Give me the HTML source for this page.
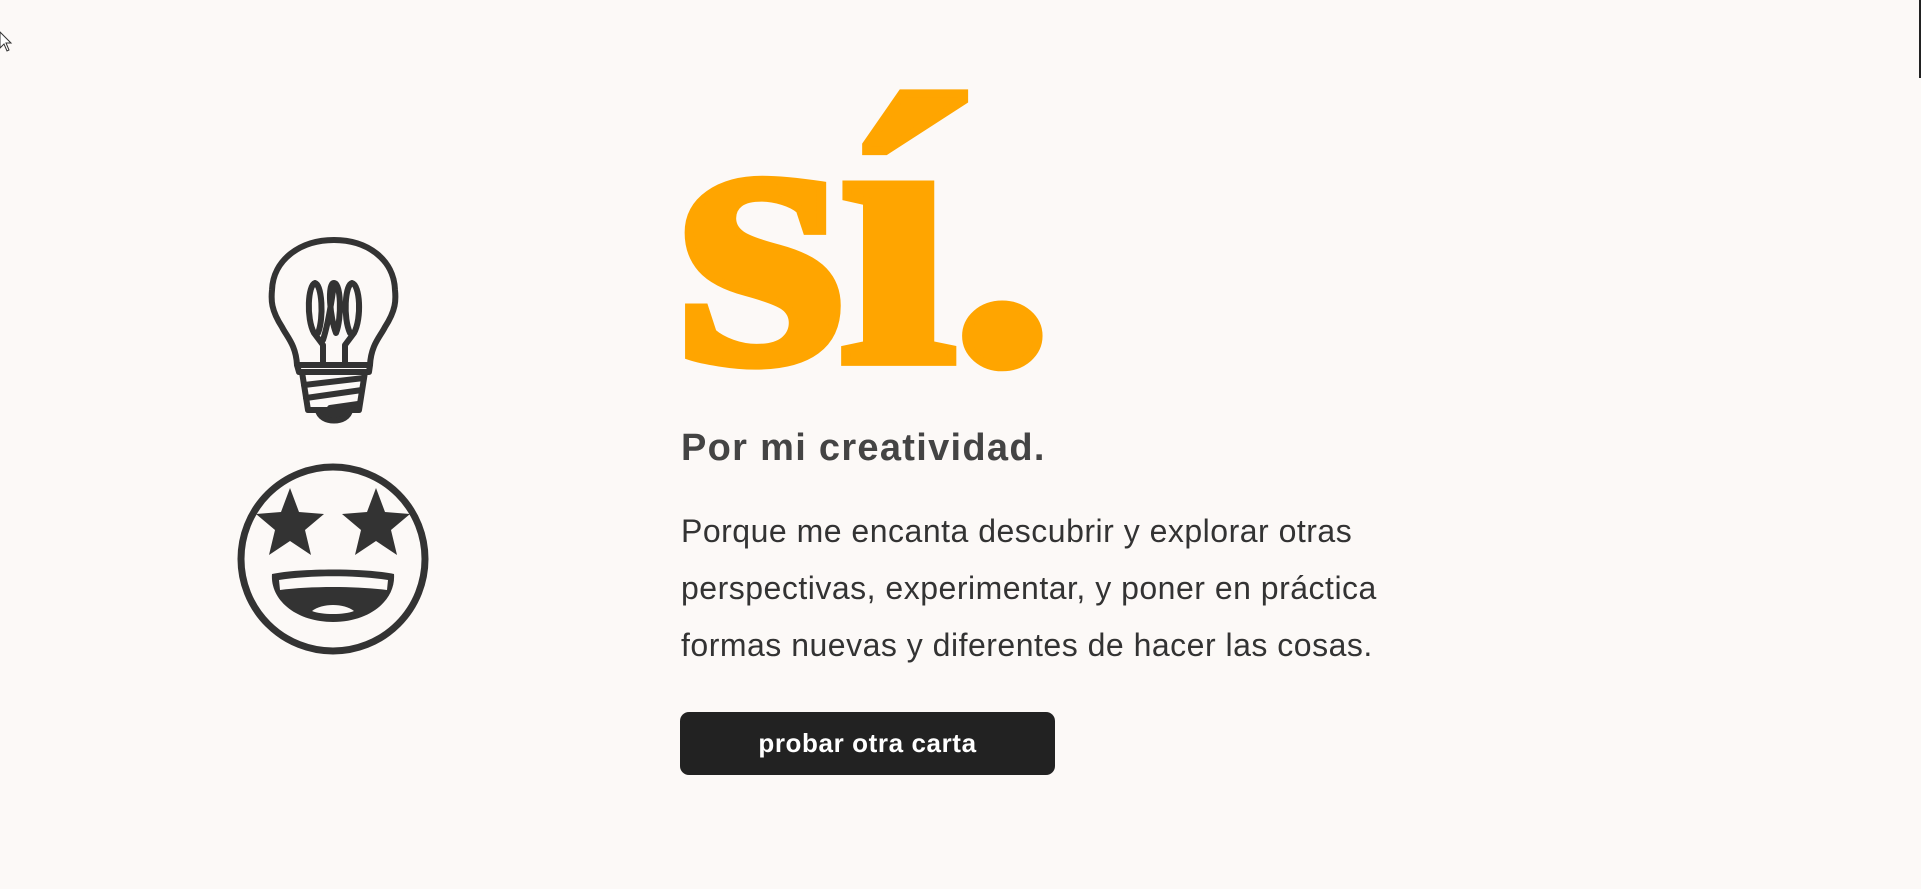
<!DOCTYPE html>
<html><head><meta charset="utf-8"><style>
html,body{margin:0;padding:0;width:1921px;height:889px;background:#fcf9f7;overflow:hidden;position:relative;font-family:"Liberation Sans",sans-serif}
.si{position:absolute;left:676px;top:40px;font-family:"Liberation Serif",serif;font-weight:bold;font-size:330px;line-height:1;color:#ffa500;-webkit-text-stroke:7px #ffa500;transform-origin:0 0;transform:scale(1.33,1.17);letter-spacing:-8px}
h2{position:absolute;left:681px;top:427px;margin:0;font-size:38px;font-weight:bold;color:#444;letter-spacing:1.3px}
p{position:absolute;left:681px;top:503px;margin:0;font-size:32px;line-height:57px;color:#333;width:790px;letter-spacing:0.5px}
.btn{position:absolute;left:680px;top:712px;width:375px;height:63px;background:#222;border-radius:9px;color:#fff;font-weight:bold;font-size:26px;line-height:63px;text-align:center;letter-spacing:0.6px}
.sb{position:absolute;left:1919px;top:0;width:2px;height:78px;background:#222}
</style></head><body>
<div class="si">sí.</div>
<h2>Por mi creatividad.</h2>
<p>Porque me encanta descubrir y explorar otras perspectivas, experimentar, y poner en práctica formas nuevas y diferentes de hacer las cosas.</p>
<div class="btn">probar otra carta</div>
<div class="sb"></div>
<svg style="position:absolute;left:0;top:0" width="1921" height="889">
<g fill="none" stroke="#333" stroke-width="6" stroke-linecap="round" stroke-linejoin="round">
<path d="M297 365 C296 345 287 337 282 327 C271 310 271 300 272 290 C273 260 300 240 334 240 C368 240 394 260 395 290 C396 300 396 310 385 327 C380 337 371 345 370 365 Z"/>
<path d="M297 365 L299 372 L369 372 L370 365"/>
<path d="M302 372 L308 410 L359 410 L365 372"/>
<path d="M304 385 L364 378 M306 398 L362 390 M330 408 L358 404"/>
<path d="M318 410 C320 424 348 424 350 410" fill="#333"/>
<path d="M323 365 L323 345 L314 333 C306 318 308 285 315 283 C322 285 324 318 318 333 M345 365 L345 345 L354 333 C362 318 360 285 352 283 C345 285 343 318 350 333 M323 340 C330 318 334 283 334 283 C327 283 330 318 336 333 C342 318 341 283 334 283"/>
</g>
<circle cx="333" cy="559" r="92" fill="none" stroke="#333" stroke-width="7"/>
<g fill="#333">
<polygon points="290,488 299,512 324,514 305,530 311,555 290,541 269,555 275,530 256,514 281,512"/>
<polygon points="376,488 385,512 410,514 391,530 397,555 376,541 355,555 361,530 342,514 367,512"/>
<path d="M272 574 C300 568 366 568 394 574 C396 600 370 622 333 622 C296 622 270 600 272 574 Z"/>
</g>
<path d="M279 580 C310 575 356 575 388 580 L387 590 C356 586 310 586 280 590 Z" fill="#fcf9f7"/>
<path d="M312 611 C322 603 344 603 354 611 C344 615 322 615 312 611 Z" fill="#fcf9f7"/>
<path d="M0 32 L0 48 L4 44 L7 51 L9 50 L6 43 L11 43 Z" fill="#fff" stroke="#333" stroke-width="1"/>
</svg>
</body></html>
